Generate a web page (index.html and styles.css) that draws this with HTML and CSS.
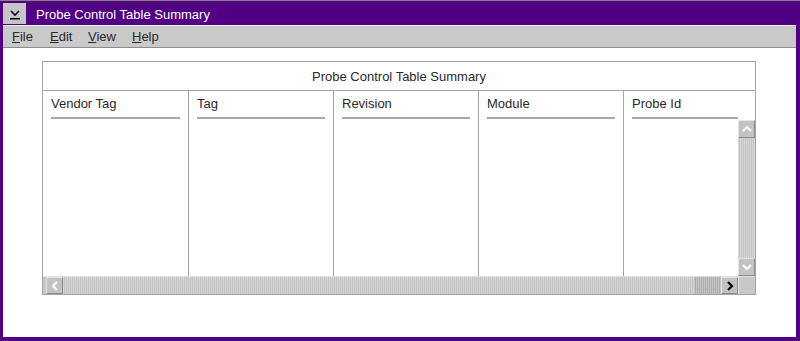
FILE: index.html
```html
<!DOCTYPE html>
<html lang="en">
<head>
    <meta charset="UTF-8">
    <title>Probe Control Table Summary</title>
    <link rel="stylesheet" href="styles.css">
</head>
<body>
    <div class="window">
        <div class="titlebar">
            <div class="sysmenu">
                <svg width="14" height="12" viewBox="0 0 14 12">
                    <path d="M3 3 L7 7 L11 3" fill="none" stroke="#000" stroke-width="1.6"/>
                    <rect x="2" y="10" width="10" height="1.5" fill="#000"/>
                </svg>
            </div>
            <span class="title">Probe Control Table Summary</span>
        </div>
        <div class="menubar">
            <span class="menu file"><u>F</u>ile</span>
            <span class="menu edit"><u>E</u>dit</span>
            <span class="menu view"><u>V</u>iew</span>
            <span class="menu"><u>H</u>elp</span>
        </div>
        <div class="client">
            <div class="frame">
                <div class="caption">Probe Control Table Summary</div>
                <div class="columns">
                    <div class="col"><div class="head">Vendor Tag</div></div>
                    <div class="col"><div class="head">Tag</div></div>
                    <div class="col"><div class="head">Revision</div></div>
                    <div class="col"><div class="head">Module</div></div>
                    <div class="col last">
                        <div class="head">Probe Id</div>
                        <div class="last-body">
                            <div class="vscroll">
                                <div class="btn">
                                    <svg width="12" height="8" viewBox="0 0 12 8"><path d="M2 6 L6 2 L10 6" fill="none" stroke="#fff" stroke-width="2"/></svg>
                                </div>
                                <div class="track"></div>
                                <div class="btn">
                                    <svg width="12" height="8" viewBox="0 0 12 8"><path d="M2 2 L6 6 L10 2" fill="none" stroke="#fff" stroke-width="2"/></svg>
                                </div>
                            </div>
                        </div>
                    </div>
                </div>
                <div class="hscroll">
                    <div class="btn hbtn">
                        <svg width="8" height="12" viewBox="0 0 8 12"><path d="M6 2 L2 6 L6 10" fill="none" stroke="#fff" stroke-width="2"/></svg>
                    </div>
                    <div class="track"></div>
                    <div class="thumb"></div>
                    <div class="btn hbtn">
                        <svg width="8" height="12" viewBox="0 0 8 12"><path d="M2 2 L6 6 L2 10" fill="none" stroke="#000" stroke-width="2.2"/></svg>
                    </div>
                    <div class="corner"></div>
                </div>
            </div>
        </div>
    </div>
</body>
</html>
```
FILE: styles.css
```css
/* Window */
body {
    margin: 0;
    font-family: 'Liberation Sans', Arial, sans-serif;
    font-size: 13px;
    background: #fff;
}

.window {
    width: 800px;
    height: 341px;
    box-sizing: border-box;
    background: #510084;
    border-top: 1px solid #808080;
    padding: 0 4px 4px 3px;
    display: flex;
    flex-direction: column;
}

.titlebar {
    height: 24px;
    display: flex;
    align-items: center;
}

.sysmenu {
    width: 23px;
    height: 21px;
    background: #c6c6c6;
    display: flex;
    align-items: center;
    justify-content: center;
    margin-top: 1px;
}

.title {
    color: #fff;
    margin-left: 10px;
    margin-top: 2px;
}

/* Menu bar */
.menubar {
    height: 21px;
    background: #c9c9c9;
    border-top: 1px solid #f0f0f0;
    border-bottom: 1px solid #8c8c8c;
    display: flex;
    align-items: center;
    padding-left: 9px;
    color: #2a2a2a;
}

.menu.file,
.menu.edit {
    width: 38px;
}

.menu.view {
    width: 44px;
}

/* Client area */
.client {
    flex: 1;
    background: #fff;
    padding: 13px 0 0 39px;
}

.frame {
    width: 714px;
    height: 234px;
    box-sizing: border-box;
    border: 1px solid #a4a4a4;
    display: flex;
    flex-direction: column;
    color: #2a2a2a;
}

.caption {
    height: 28px;
    line-height: 30px;
    text-align: center;
    border-bottom: 1px solid #a4a4a4;
}

.columns {
    flex: 1;
    display: flex;
}

.col {
    width: 146px;
    box-sizing: border-box;
    border-right: 1px solid #a4a4a4;
    padding: 0 8px;
}

.col + .col {
    width: 145px;
}

.col.last {
    flex: 1;
    border-right: none;
    padding-right: 0;
    display: flex;
    flex-direction: column;
}

.head {
    padding: 5px 0 5px;
    line-height: 16px;
    border-bottom: 2px solid #a8a8a8;
}

.last .head {
    margin-right: 17px;
}

.last-body {
    flex: 1;
    display: flex;
    justify-content: flex-end;
    padding-top: 1px;
}

/* Scroll bars */
.vscroll {
    width: 17px;
    display: flex;
    flex-direction: column;
    background: #c8c8c8;
}

.btn {
    width: 17px;
    height: 18px;
    box-sizing: border-box;
    background: #c2c2c2;
    border: 1px solid #e4e4e4;
    border-right-color: #8c8c8c;
    border-bottom-color: #8c8c8c;
    display: flex;
    align-items: center;
    justify-content: center;
}

.track {
    flex: 1;
    background-color: #cdcdcd;
    background-image: repeating-linear-gradient(90deg, #d4d4d4 0 1px, #c4c4c4 1px 2px);
}

.hscroll {
    height: 17px;
    display: flex;
    border-top: 1px solid #e0e0e0;
    padding-left: 3px;
    background: #c8c8c8;
}

.hbtn {
    width: 17px;
    height: 17px;
}

.thumb {
    width: 27px;
    background-color: #b9b9b9;
    background-image: repeating-linear-gradient(90deg, #c4c4c4 0 1px, #aeaeae 1px 2px);
}

.corner {
    width: 17px;
    background: #c8c8c8;
    border-left: 1px solid #e4e4e4;
    box-sizing: border-box;
}
```
